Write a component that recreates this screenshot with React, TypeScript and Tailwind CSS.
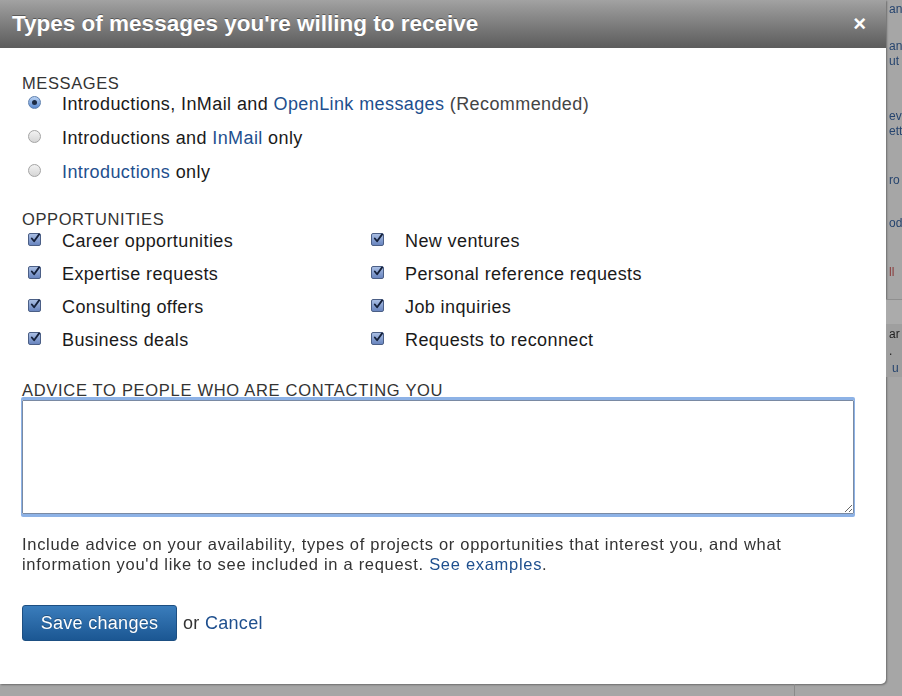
const messageOptions = [
  { checked: true, parts: [["Introductions, InMail and ", false], ["OpenLink messages", true], [" (Recommended)", false]] },
  { checked: false, parts: [["Introductions and ", false], ["InMail", true], [" only", false]] },
  { checked: false, parts: [["Introductions", true], [" only", false]] },
] as const;

const leftOpps = ["Career opportunities", "Expertise requests", "Consulting offers", "Business deals"];
const rightOpps = ["New ventures", "Personal reference requests", "Job inquiries", "Requests to reconnect"];

function Radio({ checked }: { checked: boolean }) {
  return checked ? (
    <span className="flex h-[13px] w-[13px] items-center justify-center rounded-full border border-[#5d7fae] bg-gradient-to-b from-[#b9d2f3] to-[#5b8ad0]">
      <span className="h-[5px] w-[5px] rounded-full bg-[#1c2b44]" />
    </span>
  ) : (
    <span className="h-[13px] w-[13px] rounded-full border border-[#a4a4a4] bg-gradient-to-b from-[#f2f2f2] to-[#d6d6d6]" />
  );
}

function Check() {
  return (
    <span className="flex h-[13px] w-[13px] items-center justify-center rounded-[2px] border border-[#4b5f86] bg-gradient-to-b from-[#a9bee3] to-[#6985bf]">
      <svg width="11" height="11" viewBox="0 0 11 11" className="-mt-[2px] ml-[1px]">
        <path d="M2 5.5 L4.5 8.5 L10 1" fill="none" stroke="#14203a" strokeWidth="2" strokeLinecap="round" strokeLinejoin="round" />
      </svg>
    </span>
  );
}

function OppRow({ label }: { label: string }) {
  return (
    <div className="flex h-[33px] items-center">
      <span className="flex w-[40px] pl-[6px] -mt-[4px]">
        <Check />
      </span>
      <span>{label}</span>
    </div>
  );
}

export default function App() {
  return (
    <div className="flex h-[696px] w-[902px] flex-col overflow-hidden bg-[#a6a6a6] font-['Liberation_Sans',Arial,sans-serif]">
      <div className="flex h-[684px]">
        <div className="flex w-[886px] flex-col rounded-br-[5px] bg-white shadow-[1px_1px_2px_rgba(0,0,0,0.35)]">
          <div className="flex h-[48px] items-center justify-between bg-gradient-to-b from-[#a2a2a2] to-[#5c5c5c] pl-[12px] pr-[20px]">
            <h1 className="text-[22.5px] font-bold text-white [text-shadow:0_-1px_0_rgba(0,0,0,0.35)]">
              Types of messages you're willing to receive
            </h1>
            <span className="text-[22px] font-bold leading-none text-white">×</span>
          </div>

          <div className="flex flex-col pl-[22px] pr-[20px] text-[18px] tracking-[0.4px] text-[#1a1a1a]">
            <div className="mt-[26px] text-[16.5px] leading-[18px] tracking-[0.6px] text-[#333]">MESSAGES</div>
            {messageOptions.map((o, i) => (
              <div key={i} className={i === 0 ? "-mt-[5px] flex h-[34px] items-center" : "flex h-[34px] items-center"}>
                <span className="flex w-[40px] pl-[6px] -mt-[3px]">
                  <Radio checked={o.checked} />
                </span>
                <span>
                  {o.parts.map(([t, link], j) => (
                    <span key={j} className={link ? "text-[#1e4f8e]" : i === 0 && j === 2 ? "text-[#444]" : ""}>
                      {t}
                    </span>
                  ))}
                </span>
              </div>
            ))}

            <div className="mt-[21px] text-[16.5px] leading-[18px] tracking-[0.6px] text-[#333]">OPPORTUNITIES</div>
            <div className="-mt-[3px] flex">
              <div className="flex w-[343px] flex-col">
                {leftOpps.map((l) => (
                  <OppRow key={l} label={l} />
                ))}
              </div>
              <div className="flex flex-col">
                {rightOpps.map((l) => (
                  <OppRow key={l} label={l} />
                ))}
              </div>
            </div>

            <div className="mt-[24px] text-[16.5px] leading-[18px] tracking-[0.7px] text-[#333]">ADVICE TO PEOPLE WHO ARE CONTACTING YOU</div>
            <textarea
              className="mt-[1px] h-[114px] w-[832px] resize rounded-[1px] border border-[#7a8aa3] px-[4px] py-[2px] text-[14px] shadow-[0_-2px_0_1px_#8db2e6,0_2px_0_1px_#8db2e6] outline-none"
              autoFocus
            />

            <p className="mt-[20px] text-[16.5px] leading-[20px] tracking-[0.7px] text-[#333]">
              Include advice on your availability, types of projects or opportunities that interest you, and what
              <br />
              information you'd like to see included in a request. <span className="text-[#1e4f8e]">See examples</span>.
            </p>

            <div className="mt-[31px] flex items-center gap-[6px]">
              <button className="h-[36px] w-[155px] rounded-[3px] border border-[#1d4f82] bg-gradient-to-b from-[#3a7dbc] to-[#1b5793] text-[18px] tracking-[0.3px] text-white [text-shadow:0_-1px_0_rgba(0,0,0,0.3)]">
                Save changes
              </button>
              <span className="text-[18px] tracking-[0.3px] text-[#333]">
                or <span className="text-[#1e4f8e]">Cancel</span>
              </span>
            </div>
          </div>
        </div>

        <div className="flex w-[16px] flex-col overflow-hidden">
          <div className="flex h-[300px] flex-col border-b border-[#8f8f8f] pl-[3px] text-[12px] leading-[15px] text-[#26446e]">
            <span className="mt-[2px]">an</span>
            <span className="mt-[22px]">an</span>
            <span>ut</span>
            <span className="mt-[40px]">ev</span>
            <span>ett</span>
            <span className="mt-[34px]">ro</span>
            <span className="mt-[28px]">od</span>
            <span className="mt-[34px] text-[#8a3b3b]">ll</span>
          </div>
          <div className="h-[24px] bg-[#ababab]" />
          <div className="flex flex-col bg-[#9f9f9f] pl-[3px] text-[12px] leading-[17px]">
            <span className="mt-[2px] text-[#222]">ar</span>
            <span className="text-[#222]">.</span>
            <span className="pl-[3px] text-[#26446e]">u</span>
          </div>
        </div>
      </div>
      <div className="flex h-[12px]">
        <div className="w-[795px] border-r border-[#8a8a8a]" />
      </div>
    </div>
  );
}
